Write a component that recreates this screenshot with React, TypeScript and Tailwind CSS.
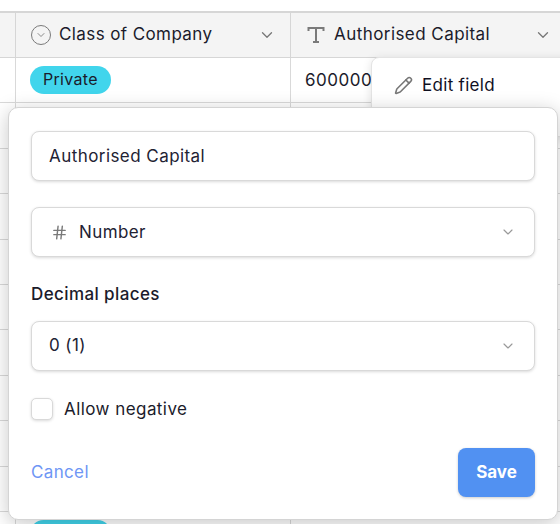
import { ChevronDown, Pencil, Hash } from 'lucide-react';

const ROWS = [0, 1, 2, 3, 4, 5, 6, 7, 8, 9, 10];

function TableHeader() {
  return (
    <div className="flex h-[47px] border-t-[2px] border-b border-[#d6d6d6] bg-[#f4f4f4]">
      <div className="w-4 border-r border-[#d6d6d6]" />
      <div className="flex w-[275px] items-center border-r border-[#d6d6d6] pl-[15px] pr-[14px]">
        <span className="flex h-5 w-5 items-center justify-center rounded-full border-[1.5px] border-[#7a7a7a]">
          <ChevronDown className="h-3 w-3 text-[#7a7a7a]" strokeWidth={1.75} />
        </span>
        <span className="ml-2 flex-1 text-[17px] tracking-[0.4px] text-[#1b1b2b]">Class of Company</span>
        <ChevronDown className="h-[18px] w-[18px] text-[#777777]" strokeWidth={1.75} />
      </div>
      <div className="flex flex-1 items-center pl-[15px] pr-2">
        <svg className="h-5 w-5 text-[#7a7a7a]" viewBox="0 0 20 20" fill="none" stroke="currentColor" strokeWidth="2">
          <path d="M2.5 6V3h15v3M10 3v14M7 17h6" />
        </svg>
        <span className="ml-2 flex-1 text-[17px] tracking-[0.44px] text-[#1b1b2b]">Authorised Capital</span>
        <ChevronDown className="h-[18px] w-[18px] text-[#777777]" strokeWidth={1.75} />
      </div>
    </div>
  );
}

function TableRow({ index }: { index: number }) {
  return (
    <div className="flex h-[45.4px] border-b border-[#d9d9d9]">
      <div className="w-4 border-r border-[#d9d9d9]" />
      <div className="flex w-[275px] items-start border-r border-[#d9d9d9] pl-[14px] pt-[8px]">
        {index === 0 && (
          <span className="rounded-full bg-[#41d5ec] px-[13px] pt-[1px] pb-[3px] text-[16px] tracking-[0.3px] text-[#1b1b2b]">Private</span>
        )}
        {/* only the top of this pill shows under the editor */}
        {index === 10 && <span className="h-[27px] w-[81px] rounded-full bg-[#41d5ec]" />}
      </div>
      <div className="flex flex-1 items-center pl-[14px] pt-[1px] text-[17px] tracking-[0.5px] text-[#1b1b2b]">{index === 0 ? '600000' : ''}</div>
    </div>
  );
}

function SelectBox({ children }: { children: React.ReactNode }) {
  return (
    <div className="flex h-[50px] items-center rounded-lg border border-[#d9d9d9] bg-white pl-[17px] pr-[18px] shadow-[0_1px_3px_rgba(0,0,0,0.15)]">
      <div className="flex flex-1 items-center text-[17px] tracking-[0.4px] text-[#222233]">{children}</div>
      <ChevronDown className="h-4 w-4 text-[#999999]" strokeWidth={1.75} />
    </div>
  );
}

export default function App() {
  return (
    <div className="relative h-[524px] w-[560px] overflow-hidden bg-white font-['Inter',sans-serif]">
      <div className="pt-[11px]">
        <TableHeader />
        {ROWS.map((i) => (
          <TableRow key={i} index={i} />
        ))}
      </div>

      {/* field menu behind the editor */}
      <div className="absolute left-[371px] top-[57px] h-[80px] w-[220px] rounded-lg border border-[#e4e4e4] bg-white shadow-[0_2px_10px_rgba(0,0,0,0.12)]">
        <div className="flex items-center pl-[22px] pt-[15px] text-[17px] tracking-[0.3px] text-[#10101f]">
          <Pencil className="h-[19px] w-[19px] text-[#777777]" strokeWidth={2} />
          <span className="ml-[9px]">Edit field</span>
        </div>
      </div>

      {/* field editor */}
      <div className="absolute left-2 top-[107px] h-[413px] w-[550px] rounded-[10px] border border-[#d4d4d4] bg-white px-[22px] pt-[23px] shadow-[0_4px_20px_rgba(0,0,0,0.22)]">
        <div className="flex h-[50px] items-center rounded-lg border border-[#d9d9d9] bg-white px-[17px] pt-[1px] text-[17px] tracking-[0.44px] text-[#222233] shadow-[0_1px_3px_rgba(0,0,0,0.15)]">
          Authorised Capital
        </div>
        <div className="mt-[26px]">
          <SelectBox>
            <Hash className="ml-[2px] h-[17px] w-[17px] text-[#7a7a7a]" strokeWidth={2} />
            <span className="ml-[11px] pt-[1px]">Number</span>
          </SelectBox>
        </div>
        <div className="mt-[25px] text-[17px] font-medium tracking-[0.4px] text-[#1b1b2b]">Decimal places</div>
        <div className="mt-[13px]">
          <SelectBox>0 (1)</SelectBox>
        </div>
        <div className="mt-[26px] flex items-center">
          <span className="h-[22px] w-[22px] rounded-[5px] border border-[#d9d9d9] bg-white shadow-[0_1px_3px_rgba(0,0,0,0.15)]" />
          <span className="ml-[11px] text-[17px] tracking-[0.44px] text-[#1b1b2b]">Allow negative</span>
        </div>
        <div className="mt-[26px] flex items-center justify-between">
          <span className="text-[17px] tracking-[0.35px] text-[#6e96f5]">Cancel</span>
          <button className="h-[49px] w-[77px] rounded-lg bg-[#5191f2] text-[17px] font-bold text-white shadow-[0_1px_3px_rgba(0,0,0,0.2)]">
            Save
          </button>
        </div>
      </div>
    </div>
  );
}
